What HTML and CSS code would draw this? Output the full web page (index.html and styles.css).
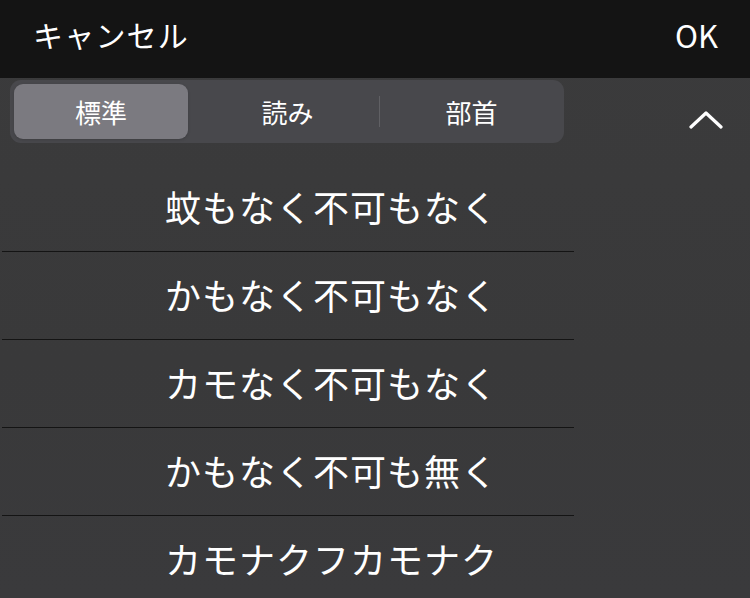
FILE: index.html
```html
<!DOCTYPE html>
<html lang="ja">
<head>
<meta charset="utf-8">
<link rel="stylesheet" href="styles.css">
</head>
<body>
<div class="screen">
  <header class="topbar">
    <span class="cancel">キャンセル</span>
    <span class="ok">OK</span>
  </header>
  <div class="toolbar">
    <div class="segmented">
      <div class="seg selected"><span class="thumb">標準</span></div>
      <div class="seg">読み</div>
      <div class="seg divided">部首</div>
    </div>
    <svg class="chevron" width="34" height="20" viewBox="0 0 34 20">
      <polyline points="2,17 17,3 32,17" fill="none" stroke="#fff" stroke-width="3.2" stroke-linecap="round" stroke-linejoin="round"/>
    </svg>
  </div>
  <ul class="list">
    <li class="row">蚊もなく不可もなく</li>
    <li class="row">かもなく不可もなく</li>
    <li class="row">カモなく不可もなく</li>
    <li class="row">かもなく不可も無く</li>
    <li class="row">カモナクフカモナク</li>
  </ul>
</div>
</body>
</html>
```
FILE: styles.css
```css
html, body {
  margin: 0;
  padding: 0;
  background: #3a3a3b;
}
body {
  font-family: "Noto Sans CJK JP", "Noto Sans", sans-serif;
  color: #fff;
}
.screen {
  width: 750px;
  height: 598px;
  overflow: hidden;
  background: linear-gradient(180deg, #3b3b3c 0%, #39393a 60%, #3a3a3c 100%);
}
.topbar {
  height: 78px;
  box-sizing: border-box;
  background: #141414;
  display: flex;
  justify-content: space-between;
  align-items: center;
  padding: 0 32px 10px 33px;
  font-size: 30px;
}
.cancel {
  letter-spacing: 1.2px;
}
.ok {
  font-size: 31px;
}
.toolbar {
  height: 86px;
  display: flex;
  align-items: flex-start;
  padding: 2px 0 0 10px;
  box-sizing: border-box;
}
.segmented {
  width: 554px;
  height: 63px;
  box-sizing: border-box;
  padding: 4px;
  border-radius: 11px;
  background: #48484c;
  display: grid;
  grid-template-columns: 182px 183px 181px;
}
.seg {
  display: flex;
  align-items: center;
  justify-content: center;
  font-size: 26px;
  position: relative;
}
.seg.selected {
  justify-content: flex-start;
}
.thumb {
  width: 174px;
  height: 55px;
  border-radius: 9px;
  background: #7b7a80;
  display: flex;
  align-items: center;
  justify-content: center;
  box-shadow: 0 1px 3px rgba(0,0,0,0.15);
}
.seg.divided {
  padding-left: 4px;
}
.seg.divided::before {
  content: "";
  position: absolute;
  left: 0;
  top: 12px;
  bottom: 12px;
  width: 1px;
  background: #606064;
}
.chevron {
  margin: 30px 0 0 125px;
}
.list {
  list-style: none;
  margin: 0;
  padding: 0 0 0 2px;
}
.row {
  width: 572px;
  height: 88px;
  box-sizing: border-box;
  border-bottom: 1px solid #141414;
  display: flex;
  align-items: center;
  padding: 0 0 4px 163px;
  font-size: 36px;
  letter-spacing: 1px;
}
.row:last-child {
  border-bottom: none;
}
```
